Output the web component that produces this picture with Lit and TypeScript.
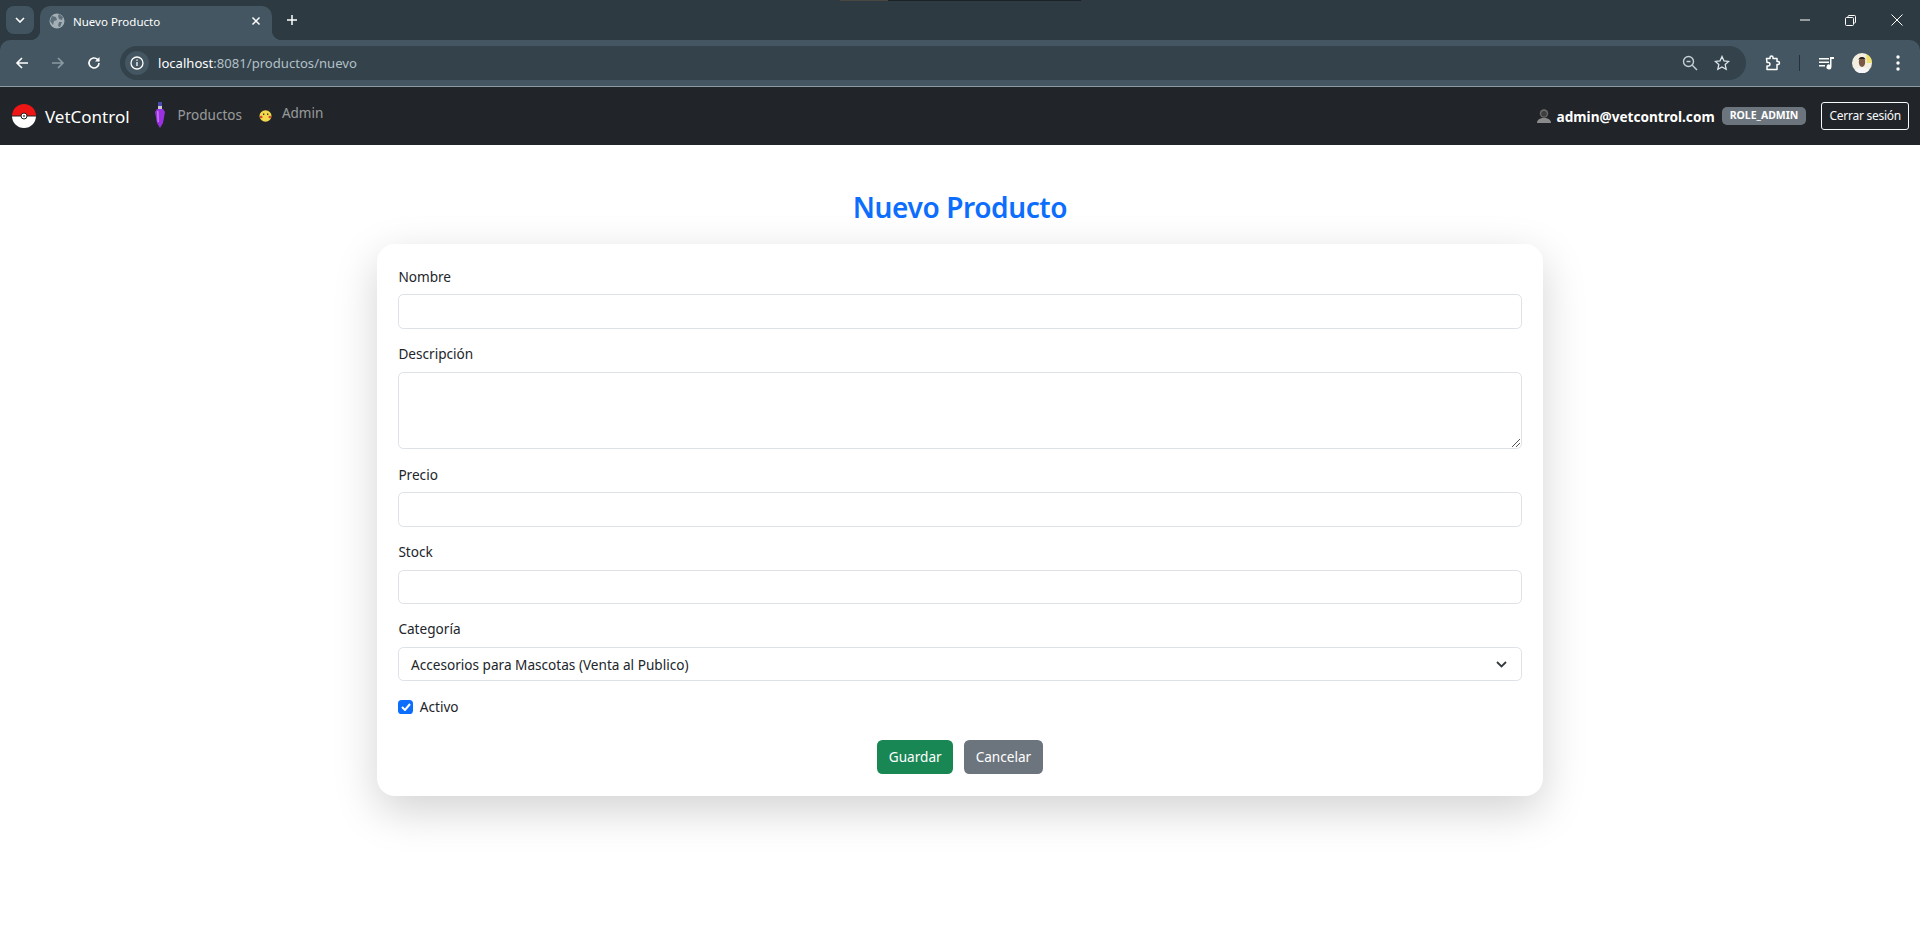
import { LitElement, html, css } from 'lit';
import { customElement } from 'lit/decorators.js';

// browser frame + vet control form, page is at 90% zoom so rem = 14.4px
@customElement('app-root')
export class AppRoot extends LitElement {
  static styles = css`
    :host {
      display: block;
      height: 928px;
      overflow: hidden;
      background: #fff;
      font-family: "Noto Sans", "Open Sans", sans-serif;
      color: #212529;
    }

    .chrome {
      background: #2d3a42;
    }

    /* tab strip */
    .tabstrip {
      height: 40px;
      display: flex;
      align-items: flex-start;
      position: relative;
    }
    .notch {
      position: absolute;
      left: 840px;
      top: 0;
      width: 241px;
      height: 1px;
      background: linear-gradient(to right, #4a4640 48px, #1c2328 48px);
    }
    .tab-search {
      width: 28px;
      height: 28px;
      margin: 6px 0 0 6px;
      border-radius: 8px;
      background: #41545f;
      display: flex;
      align-items: center;
      justify-content: center;
    }
    .tab {
      position: relative;
      width: 232px;
      height: 34px;
      margin: 6px 0 0 6px;
      border-radius: 10px 10px 0 0;
      background: #435661;
      display: flex;
      align-items: center;
      color: #fff;
      font-size: 11.5px;
      box-sizing: border-box;
      padding: 0 11px 4px 9px;
    }
    .tab::before,
    .tab::after {
      content: "";
      position: absolute;
      bottom: 0;
      width: 10px;
      height: 10px;
    }
    .tab::before {
      left: -10px;
      background: radial-gradient(circle at 0 0, transparent 10px, #435661 10.5px);
    }
    .tab::after {
      right: -10px;
      background: radial-gradient(circle at 100% 0, transparent 10px, #435661 10.5px);
    }
    .tab .title {
      flex: 1;
      margin-left: 8px;
    }
    .new-tab {
      margin: 10px 0 0 10px;
      width: 20px;
      height: 20px;
      display: flex;
      align-items: center;
      justify-content: center;
    }
    .win {
      margin-left: auto;
      display: flex;
      align-items: center;
      height: 40px;
    }
    .win svg {
      display: block;
      margin-right: 35px;
    }
    .win svg:last-child {
      margin-right: 17px;
    }

    /* toolbar */
    .toolbar {
      height: 46px;
      background: #435661;
      border-radius: 10px 10px 0 0;
      border-bottom: 1px solid #8b9aa3;
      display: flex;
      align-items: center;
      padding-right: 20px;
    }
    .nav-icon {
      width: 22px;
      display: flex;
      justify-content: center;
    }
    .nav-group {
      display: flex;
      gap: 14px;
      margin-left: 11px;
    }
    .omnibox {
      flex: 1;
      height: 34px;
      margin: 0 19px 0 15px;
      border-radius: 17px;
      background: #33424b;
      display: flex;
      align-items: center;
      font-size: 13.1px;
      color: #b4c0c7;
    }
    .site-info {
      width: 24px;
      height: 24px;
      border-radius: 50%;
      background: #435661;
      margin: 0 9px 0 5px;
      display: flex;
      align-items: center;
      justify-content: center;
    }
    .host {
      color: #fff;
    }
    .omni-right {
      margin-left: auto;
      display: flex;
      gap: 16px;
      align-items: center;
      margin-right: 16px;
    }
    .tools {
      display: flex;
      align-items: center;
    }
    .sep {
      width: 1px;
      height: 16px;
      background: #26323a;
      margin: 0 19px 0 18px;
    }
    .avatar {
      margin: 0 24px 0 17px;
      display: block;
    }

    /* app navbar */
    .navbar {
      height: 58px;
      background: #212529;
      display: flex;
      align-items: center;
      padding: 0 11px 0 12px;
    }
    .brand {
      display: flex;
      align-items: center;
      gap: 9px;
      color: #fff;
      font-size: 17px;
      margin-right: 24px;
    }
    .nav-link {
      display: flex;
      align-items: center;
      color: rgba(255, 255, 255, 0.55);
      font-size: 13.5px;
    }
    .nav-link.products {
      gap: 12px;
      margin-right: 17px;
      padding-bottom: 2px;
    }
    .nav-link.admin {
      gap: 10px;
      padding-bottom: 7px;
    }
    .pika {
      margin-top: 3px;
    }
    .nav-right {
      margin-left: auto;
      display: flex;
      align-items: center;
    }
    .user {
      color: #fff;
      font-weight: 700;
      font-size: 13.6px;
      display: flex;
      align-items: center;
      gap: 6px;
      margin-right: 7px;
    }
    .badge {
      background: #6c757d;
      color: #fff;
      font-size: 10.5px;
      font-weight: 700;
      border-radius: 5px;
      padding: 0 8px;
      height: 18px;
      line-height: 17px;
      margin-right: 15px;
    }
    .logout {
      border: 1px solid #f8f9fa;
      border-radius: 3px;
      color: #f8f9fa;
      font-size: 12px;
      letter-spacing: -0.25px;
      height: 28px;
      line-height: 26px;
      padding: 0 7px;
      box-sizing: border-box;
    }

    /* form page */
    .page {
      width: 1166.4px;
      margin: 0 auto;
    }
    h2 {
      margin: 0;
      padding-top: 45px;
      height: 54px;
      font-size: 28px;
      letter-spacing: -0.4px;
      line-height: 34.5px;
      font-weight: 600;
      text-align: center;
      color: #0d6efd;
    }
    .card {
      background: #fff;
      border-radius: 18px;
      padding: 21.6px;
      box-sizing: border-box;
      height: 552px;
      box-shadow: 0 14.4px 43.2px rgba(0, 0, 0, 0.175);
    }
    .field {
      margin-bottom: 14.4px;
    }
    label {
      display: block;
      font-size: 13.6px;
      line-height: 21.6px;
      margin-bottom: 7.2px;
    }
    .control {
      height: 34.2px;
      border: 1px solid #dee2e6;
      border-radius: 5.4px;
      box-sizing: border-box;
      display: flex;
      align-items: center;
      font-size: 13.6px;
      padding: 0 14px 0 11.7px;
    }
    .control.area {
      height: 77.5px;
      margin-bottom: 1.8px;
      align-items: flex-end;
      justify-content: flex-end;
      padding: 0 1px 1px 0;
    }
    .control.select {
      justify-content: space-between;
    }
    .check {
      display: flex;
      align-items: center;
      gap: 7px;
      font-size: 13.6px;
      line-height: 21.6px;
      margin-top: 15px;
    }
    .box {
      width: 14.4px;
      height: 14.4px;
      border-radius: 3.6px;
      background: #0d6efd;
      display: flex;
      align-items: center;
      justify-content: center;
    }
    .actions {
      display: flex;
      justify-content: center;
      gap: 11px;
      margin-top: 22px;
    }
    .btn {
      height: 34.2px;
      line-height: 34.2px;
      border-radius: 5.4px;
      color: #fff;
      font-size: 13.6px;
      padding: 0 11.5px;
    }
    .btn.save {
      background: #198754;
    }
    .btn.cancel {
      background: #6c757d;
    }
  `;

  render() {
    return html`
      <div class="chrome">
        <div class="tabstrip">
          <div class="notch"></div>
          <div class="tab-search">
            <svg width="10" height="6" viewBox="0 0 10 6" fill="none" stroke="#fff" stroke-width="1.6"><path d="M1 1l4 4 4-4"/></svg>
          </div>
          <div class="tab">
            <svg width="16" height="16" viewBox="0 0 16 16"><circle cx="8" cy="8" r="7.500" fill="#a3aeb5"/><path d="M3 3l4 1 1 3-3 1-1 4-3-4zM10 1l4 3-1 3-3-1-1-3zM10 9l3 0-2 5-2-1z" fill="#5d6f7a"/></svg>
            <span class="title">Nuevo Producto</span>
            <svg width="10" height="10" viewBox="0 0 10 10" stroke="#fff" stroke-width="1.500"><path d="M1.500 1.500l7 7M8.500 1.500l-7 7"/></svg>
          </div>
          <div class="new-tab">
            <svg width="12" height="12" viewBox="0 0 12 12" stroke="#fff" stroke-width="1.500"><path d="M6 1v10M1 6h10"/></svg>
          </div>
          <div class="win">
            <svg width="10" height="2" viewBox="0 0 10 2"><path d="M0 1h10" stroke="#fff"/></svg>
            <svg width="11" height="11" viewBox="0 0 11 11" fill="none" stroke="#fff"><rect x=".5" y="2.500" width="8" height="8" rx="1"/><path d="M3 2.500V1.500a1 1 0 0 1 1-1h5.500a1 1 0 0 1 1 1V7a1 1 0 0 1-1 1h-1"/></svg>
            <svg width="12" height="12" viewBox="0 0 12 12" stroke="#fff"><path d="M.5.5l11 11M11.500.5l-11 11"/></svg>
          </div>
        </div>

        <div class="toolbar">
          <div class="nav-group">
            <span class="nav-icon"><svg width="14" height="14" viewBox="0 0 14 14" fill="none" stroke="#fff" stroke-width="1.600"><path d="M13 7H2M7 2L2 7l5 5"/></svg></span>
            <span class="nav-icon"><svg width="14" height="14" viewBox="0 0 14 14" fill="none" stroke="#8c9aa3" stroke-width="1.600"><path d="M1 7h11M7 2l5 5-5 5"/></svg></span>
            <span class="nav-icon"><svg width="14" height="14" viewBox="0 0 14 14" fill="none" stroke="#fff" stroke-width="1.600"><path d="M12 7a5 5 0 1 1-1.500-3.600L12 5"/><path d="M12.500 1v4.500H8" fill="#fff" stroke="none"/></svg></span>
          </div>
          <div class="omnibox">
            <span class="site-info">
              <svg width="14" height="14" viewBox="0 0 14 14" fill="none" stroke="#fff" stroke-width="1.300"><circle cx="7" cy="7" r="6"/><path d="M7 6v4M7 3.500v1.300"/></svg>
            </span>
            <span class="host">localhost</span><span>:8081/productos/nuevo</span>
            <span class="omni-right">
              <svg width="16" height="16" viewBox="0 0 16 16" fill="none" stroke="#c6d0d6" stroke-width="1.400"><circle cx="6.500" cy="6.500" r="5"/><path d="M4.500 6.500h4M10.300 10.300L15 15"/></svg>
              <svg width="16" height="16" viewBox="0 0 16 16" fill="none" stroke="#dfe5e9" stroke-width="1.300"><path d="M8 1.500l2 4.400 4.700.5-3.500 3.200 1 4.700L8 11.900 3.800 14.300l1-4.700L1.300 6.400 6 5.900z"/></svg>
            </span>
          </div>
          <div class="tools">
            <svg width="16" height="16" viewBox="0 0 16 16" fill="none" stroke="#fff" stroke-width="1.500" stroke-linejoin="round"><path d="M1.500 3.500h3.500V2.500a1.500 1.500 0 0 1 3 0v1h4v3h1a1.500 1.500 0 0 1 0 3h-1v5H2v-3.500h1.200a1.700 1.700 0 0 0 0-3.500H2z"/></svg>
            <span class="sep"></span>
            <svg width="16" height="14" viewBox="0 0 16 14" fill="#fff"><path d="M0 2h10v1.400H0zM0 5.500h10v1.400H0zM0 9h6v1.400H0z"/><path d="M11 1h4v2h-2.500v8a2.500 2.500 0 1 1-1.500-2.300z"/></svg>
            <svg class="avatar" width="20" height="20" viewBox="0 0 20 20">
              <circle cx="10" cy="10" r="10" fill="#f3efe0"/>
              <path d="M14 1a10 10 0 0 1 6 9h-5z" fill="#f0e070"/>
              <path d="M3 17.500c2-4 12-4 14 0a10 10 0 0 1-14 0z" fill="#f7f7f7"/>
              <ellipse cx="10" cy="9" rx="3.200" ry="5" fill="#7a5a45"/>
              <path d="M6.500 7c0-4 7-4 7 0l-1-1H7.500z" fill="#2a211c"/>
            </svg>
            <svg width="4" height="16" viewBox="0 0 4 16" fill="#fff"><circle cx="2" cy="2" r="1.700"/><circle cx="2" cy="8" r="1.700"/><circle cx="2" cy="14" r="1.700"/></svg>
          </div>
        </div>
      </div>

      <nav class="navbar">
        <div class="brand">
          <svg width="24" height="24" viewBox="0 0 24 24">
            <path d="M0 12a12 12 0 0 1 24 0z" fill="#ee1515"/>
            <path d="M0 12a12 12 0 0 0 24 0z" fill="#fff"/>
            <path d="M0 12h24" stroke="#222" stroke-width="1"/>
            <circle cx="12" cy="12" r="3" fill="#fff" stroke="#222" stroke-width="1"/>
            <circle cx="12" cy="12" r="1" fill="#555"/>
          </svg>
          <span>VetControl</span>
        </div>
        <span class="nav-link products">
          <svg width="12" height="26" viewBox="0 0 12 26">
            <rect x="4" y="0" width="4" height="4" fill="#4a4aa8"/>
            <rect x="4" y="4" width="4" height="3" fill="#c9c9d6"/>
            <path d="M3 7h6l2 3-2 11-3 5-3-5-2-11z" fill="#9a30e0"/>
            <path d="M3 9l1.500 0 .5 11-1.500 0z" fill="#c27af0"/>
          </svg>
          Productos
        </span>
        <span class="nav-link admin">
          <svg class="pika" width="13" height="15" viewBox="0 0 13 15">
            <path d="M2 0l2 4h5l2-4-1 5-7 0z" fill="#3b3220"/>
            <ellipse cx="6.500" cy="9" rx="6" ry="5.800" fill="#f3d84b"/>
            <circle cx="2.200" cy="10" r="1.300" fill="#d8402f"/>
            <circle cx="10.800" cy="10" r="1.300" fill="#d8402f"/>
            <rect x="4" y="6.500" width="1.300" height="1.500" fill="#3b3220"/>
            <rect x="8" y="6.500" width="1.300" height="1.500" fill="#3b3220"/>
          </svg>
          Admin
        </span>
        <div class="nav-right">
          <span class="user">
            <svg width="14" height="14" viewBox="0 0 14 14">
              <circle cx="7" cy="4.500" r="4.200" fill="#6a6a6a"/>
              <circle cx="7" cy="4.800" r="2.800" fill="#3e3e3e"/>
              <path d="M0 14c0-3.500 3-5 7-5s7 1.500 7 5z" fill="#8a8a8a"/>
            </svg>
            admin@vetcontrol.com
          </span>
          <span class="badge">ROLE_ADMIN</span>
          <span class="logout">Cerrar sesión</span>
        </div>
      </nav>

      <main class="page">
        <h2>Nuevo Producto</h2>
        <div class="card">
          <div class="field"><label>Nombre</label><div class="control"></div></div>
          <div class="field">
            <label>Descripción</label>
            <div class="control area">
              <svg width="9" height="9" viewBox="0 0 9 9" stroke="#555" stroke-width="1"><path d="M1 9l8-8M5 9l4-4"/></svg>
            </div>
          </div>
          <div class="field"><label>Precio</label><div class="control"></div></div>
          <div class="field"><label>Stock</label><div class="control"></div></div>
          <div class="field">
            <label>Categoría</label>
            <div class="control select">
              <span>Accesorios para Mascotas (Venta al Publico)</span>
              <svg width="11" height="7" viewBox="0 0 11 7" fill="none" stroke="#343a40" stroke-width="1.800"><path d="M1 1l4.500 4.500L10 1"/></svg>
            </div>
          </div>
          <div class="check">
            <span class="box"><svg width="10" height="8" viewBox="0 0 10 8" fill="none" stroke="#fff" stroke-width="2"><path d="M1 4l3 3 5-6"/></svg></span>
            Activo
          </div>
          <div class="actions">
            <span class="btn save">Guardar</span>
            <span class="btn cancel">Cancelar</span>
          </div>
        </div>
      </main>
    `;
  }
}
